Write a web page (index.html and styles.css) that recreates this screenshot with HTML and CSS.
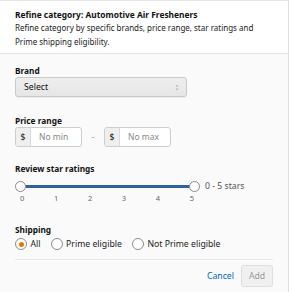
FILE: index.html
```html
<!DOCTYPE html>
<html lang="en">

<head>
  <meta charset="UTF-8">
  <meta name="viewport" content="width=device-width, initial-scale=1.0">
  <title>Refine category</title>
  <link rel="stylesheet" href="styles.css">
</head>

<body>
  <div class="panel">
    <div class="panel-head">
      <div class="title">Refine category: Automotive Air Fresheners</div>
      <p class="desc">Refine category by specific brands, price range, star ratings and<br>Prime shipping eligibility.</p>
    </div>
    <div class="panel-body">
      <div class="field">
        <div class="label">Brand</div>
        <div class="select">
          <span>Select</span>
          <svg class="select-arrow" width="4" height="7" viewBox="0 0 4 7">
            <path d="M2 0.5L3.6 2.6H0.4Z M2 6.5L3.6 4.4H0.4Z" fill="#b5b5b5" />
          </svg>
        </div>
      </div>

      <div class="field field-price">
        <div class="label">Price range</div>
        <div class="price-row">
          <div class="price-input"><span class="prefix">$</span><span class="placeholder">No min</span></div>
          <span class="dash">-</span>
          <div class="price-input"><span class="prefix">$</span><span class="placeholder">No max</span></div>
        </div>
      </div>

      <div class="field field-stars">
        <div class="label">Review star ratings</div>
        <div class="range">
          <div class="slider">
            <div class="track"></div>
            <span class="thumb thumb-min"></span>
            <span class="thumb thumb-max"></span>
          </div>
          <span class="slider-value">0 - 5 stars</span>
          <div class="ticks">
            <span>0</span><span>1</span><span>2</span><span>3</span><span>4</span><span>5</span>
          </div>
        </div>
      </div>

      <div class="field field-shipping">
        <div class="label">Shipping</div>
        <div class="radio-row">
          <label class="radio checked"><span class="circle"></span>All</label>
          <label class="radio"><span class="circle"></span>Prime eligible</label>
          <label class="radio"><span class="circle"></span>Not Prime eligible</label>
        </div>
      </div>

      <div class="actions">
        <a class="btn-cancel" href="#">Cancel</a>
        <button class="btn-add" type="button">Add</button>
      </div>
    </div>
  </div>
</body>

</html>
```

FILE: styles.css
```css
body {
  margin: 0;
  font-family: "Noto Sans", "Open Sans", sans-serif;
  font-size: 8.7px;
  color: #111;
}

.panel {
  width: 288px;
  height: 291px;
  border-top: 1px solid #e6e6e6;
  border-right: 1px solid #dcdcdc;
  background-color: #fafafa;
}

.panel-head {
  padding: 7px 15px 5px;
  background-color: #fff;
  border-bottom: 1px solid #e4e4e4;
}

.title {
  font-size: 8.4px;
  font-weight: 700;
  line-height: 13px;
}

.desc {
  margin: 0;
  font-size: 8px;
  line-height: 13.5px;
  color: #222;
}

.panel-body {
  padding: 10px 15px 0;
}

.label {
  font-size: 8.3px;
  font-weight: 700;
  line-height: 13px;
}

/* brand */
.select {
  display: flex;
  align-items: center;
  justify-content: space-between;
  box-sizing: border-box;
  width: 172px;
  height: 20px;
  padding: 0 7px 0 8px;
  border: 1px solid #c9c9c9;
  border-radius: 3px;
  background: linear-gradient(#eeeeee, #e6e6e6);
  box-shadow: 0 1px 0 rgba(0, 0, 0, 0.05);
}

/* price */
.field-price {
  margin-top: 17px;
}

.price-row {
  display: flex;
  align-items: center;
}

.price-input {
  display: flex;
  box-sizing: border-box;
  width: 67px;
  height: 20px;
  border: 1px solid #cdcdcd;
  border-radius: 3px;
  background-color: #fff;
  overflow: hidden;
}

.price-input .prefix {
  width: 14px;
  line-height: 18px;
  text-align: center;
  background-color: #efefef;
  border-right: 1px solid #dadada;
}

.price-input .placeholder {
  padding-left: 8px;
  font-size: 8.5px;
  line-height: 18px;
  color: #888;
}

.dash {
  width: 22px;
  text-align: center;
  color: #999;
}

/* stars */
.field-stars {
  margin-top: 15px;
}

.range {
  display: grid;
  grid-template-columns: 184px auto;
  align-items: center;
  justify-content: start;
  margin-top: 6px;
}

.slider {
  position: relative;
  height: 10px;
}

.track {
  margin: 3.5px 5px 0;
  height: 3px;
  background-color: #2f6296;
}

.thumb {
  position: absolute;
  top: -0.5px;
  box-sizing: border-box;
  width: 11px;
  height: 11px;
  border: 1px solid #8a8a8a;
  border-radius: 50%;
  background-color: #fff;
}

.thumb-min {
  left: 0;
}

.thumb-max {
  right: -1px;
}

.slider-value {
  margin-left: 6px;
  line-height: 10px;
  color: #555;
}

.ticks {
  display: flex;
  justify-content: space-between;
  margin: 2px 5px 0;
  line-height: 10px;
  font-size: 7.5px;
  color: #666;
}

/* shipping */
.field-shipping {
  margin-top: 20px;
}

.radio-row {
  display: flex;
  gap: 10px;
  margin-top: 2px;
  height: 12px;
  align-items: center;
}

.radio {
  display: inline-flex;
  align-items: center;
  gap: 3.5px;
  color: #222;
}

.radio .circle {
  display: inline-flex;
  align-items: center;
  justify-content: center;
  box-sizing: border-box;
  width: 12px;
  height: 12px;
  border: 1px solid #8d8d8d;
  border-radius: 50%;
  background-color: #fff;
}

.radio.checked .circle::after {
  content: "";
  width: 5px;
  height: 5px;
  border-radius: 50%;
  background-color: #e77600;
}

/* footer */
.actions {
  display: flex;
  align-items: center;
  justify-content: flex-end;
  gap: 7px;
  margin-top: 9px;
  padding-top: 5px;
  border-top: 1px solid #e8e8e8;
}

.btn-cancel {
  color: #0066c0;
  text-decoration: none;
}

.btn-add {
  width: 32px;
  height: 22px;
  padding: 0;
  font-family: inherit;
  font-size: 8.7px;
  color: #999;
  border: 1px solid #dedede;
  border-radius: 3px;
  background-color: #f0f0f0;
}
```
